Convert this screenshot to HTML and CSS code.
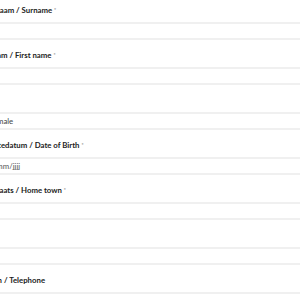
FILE: index.html
```html
<!DOCTYPE html>
<html>
<head>
<meta charset="utf-8">
<link rel="stylesheet" href="styles.css">
</head>
<body>
<form class="form">
  <div class="field">
    <label class="label">Achternaam / Surname <span class="req">*</span></label>
    <div class="input"></div>
  </div>
  <div class="field">
    <label class="label">Voornaam / First name <span class="req">*</span></label>
    <div class="input"></div>
  </div>
  <div class="field">
    <label class="label"></label>
    <div class="input"><span class="value">Female</span></div>
  </div>
  <div class="field">
    <label class="label">Geboortedatum / Date of Birth <span class="req">*</span></label>
    <div class="input"><span class="placeholder">dd/mm/jjjj</span></div>
  </div>
  <div class="field">
    <label class="label">Woonplaats / Home town <span class="req">*</span></label>
    <div class="input"></div>
  </div>
  <div class="field">
    <label class="label"></label>
    <div class="input"></div>
  </div>
  <div class="field">
    <label class="label">Telefoon / Telephone</label>
    <div class="input"></div>
  </div>
</form>
</body>
</html>
```

FILE: styles.css
```css
html, body {
  margin: 0;
  padding: 0;
  background: #ffffff;
  overflow: hidden;
}
body {
  font-family: Lato, "Liberation Sans", sans-serif;
  width: 300px;
  height: 300px;
}
.form {
  display: flex;
  flex-direction: column;
  margin: -5px 0 0 -28px;
  width: 340px;
}
.field {
  display: flex;
  flex-direction: column;
  height: 45px;
}
.label {
  box-sizing: border-box;
  height: 27px;
  padding-top: 9px;
  line-height: 12px;
  font-size: 7.8px;
  font-weight: bold;
  color: #222222;
  white-space: nowrap;
}
.req {
  font-size: 5px;
  vertical-align: top;
  color: #999999;
}
.input {
  box-sizing: border-box;
  height: 18px;
  border-top: 2px solid #f0f0f0;
  border-bottom: 2px solid #f0f0f0;
  display: flex;
  align-items: center;
  padding-left: 12.3px;
  font-size: 7.8px;
  white-space: nowrap;
}
.value {
  margin-left: 4.5px;
  color: #444444;
}
.placeholder {
  color: #555555;
}
```
